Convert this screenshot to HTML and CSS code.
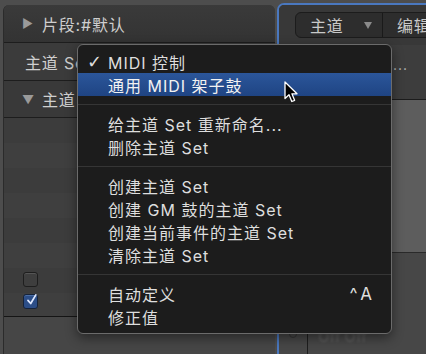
FILE: index.html
```html
<!DOCTYPE html>
<html lang="zh">
<head>
<meta charset="utf-8">
<link rel="stylesheet" href="styles.css">
</head>
<body>
<div class="app">
  <section class="left">
    <div class="row hdr"><span class="tri">▶</span><span>片段:#默认</span></div>
    <div class="row r2"><span class="clip">主道 Set</span></div>
    <div class="row r3"><span class="tri">▼</span><span class="clip2">主道 Set</span></div>
    <div class="list">
      <div class="cbrow"><span class="cb"></span></div>
      <div class="cbrow"><span class="cb on"><svg viewBox="0 0 14 16" width="14" height="16"><path d="M2.5 8.5 L6 12.5 L12.5 1.5" fill="none" stroke="#dfe9ff" stroke-width="2.2" stroke-linecap="round" stroke-linejoin="round"/></svg></span></div>
    </div>
    <div class="foot"></div>
  </section>
  <section class="right">
    <div class="toolbar">
      <div class="seg"><span class="seg-a">主道</span><span class="caret"></span><span class="seg-div"></span><span class="seg-b">编辑</span></div>
    </div>
    <div class="rrow"><span class="dots">...</span></div>
    <div class="rlight"></div>
    <div class="rbottom"><span class="knob"></span><span class="vline"></span><span class="offs">Off Off</span></div>
  </section>

  <div class="menu">
    <div class="item"><span class="check">✓</span><span>MIDI 控制</span></div>
    <div class="item hl"><span>通用 MIDI 架子鼓</span></div>
    <div class="sep"></div>
    <div class="item"><span>给主道 Set 重新命名...</span></div>
    <div class="item"><span>删除主道 Set</span></div>
    <div class="sep"></div>
    <div class="item"><span>创建主道 Set</span></div>
    <div class="item"><span>创建 GM 鼓的主道 Set</span></div>
    <div class="item"><span>创建当前事件的主道 Set</span></div>
    <div class="item"><span>清除主道 Set</span></div>
    <div class="sep"></div>
    <div class="item"><span>自动定义</span><span class="key">^A</span></div>
    <div class="item"><span>修正值</span></div>
  </div>

  <svg class="cursor" viewBox="0 0 16 23" width="16" height="23">
    <path d="M1 1 L1 17.5 L5 13.8 L7.8 20.5 L10.6 19.3 L7.9 12.8 L13 12.8 Z" fill="#000" stroke="#fff" stroke-width="1.3" stroke-linejoin="round"/>
  </svg>
</div>
</body>
</html>
```

FILE: styles.css
```css
* { box-sizing: border-box; }
html, body { margin: 0; padding: 0; }
body {
  width: 426px;
  height: 354px;
  overflow: hidden;
  background: #4a4a4a;
  font-family: "Inter", "Noto Sans CJK SC", sans-serif;
}
.app {
  position: relative;
  width: 426px;
  height: 354px;
  display: flex;
  gap: 2px;
  padding: 3px 0 0 3px;
  background: #4d4d4d;
}

/* left panel */
.left {
  width: 272px;
  margin-top: 2px;
  display: flex;
  flex-direction: column;
  background: #3d3d3d;
  border-radius: 6px 6px 0 0;
  border-left: 1px solid #2b2b2b;
  overflow: hidden;
}
.row {
  height: 38px;
  flex: none;
  display: flex;
  align-items: center;
  gap: 8px;
  padding-left: 18px;
  border-bottom: 1px solid #1d1d1d;
  color: #cfcfcf;
  font-size: 16px;
  letter-spacing: 0.8px;
  white-space: nowrap;
}
.hdr { height: 38px; background: linear-gradient(#3a3a3a, #333); }
.r2 { background: #3b3b3b; padding-left: 21px; }
.r3 { background: #393939; height: 37px; }
.clip { display: block; width: 55px; overflow: hidden; }
.clip2 { display: block; width: 38px; overflow: hidden; }
.tri { color: #9a9a9a; font-size: 12px; width: 12px; }
.list {
  flex: none;
  height: 199px;
  display: flex;
  flex-direction: column;
  justify-content: flex-end;
  padding: 0 0 4px 19px;
  background: repeating-linear-gradient(#3c3c3c 0 25px, #3f3f3f 25px 50px);
  border-bottom: 1px solid #151515;
}
.cbrow { height: 22px; display: flex; align-items: center; }
.cb {
  width: 15px;
  height: 15px;
  border-radius: 3px;
  background: #3e3e3e;
  border: 1px solid #1e1e1e;
  box-shadow: inset 0 1px 0 #555;
  display: flex;
  align-items: flex-end;
  justify-content: center;
}
.cb.on { background: #2c4e88; border-color: #16233a; box-shadow: inset 0 1px 0 #4b6ea6; overflow: visible; }
.cb.on svg { margin-left: 2px; }
.foot { flex: 1; background: #464646; }

/* right panel */
.right {
  flex: 1;
  display: flex;
  flex-direction: column;
  border-left: 2px solid #4a78bf;
  border-top: 2px solid #4a78bf;
  border-radius: 7px 0 0 0;
  overflow: hidden;
  background: #3c3c3c;
}
.toolbar {
  height: 40px;
  flex: none;
  display: flex;
  align-items: center;
  padding-left: 16px;
  background: #383838;
  overflow: hidden;
}
.seg {
  width: 160px;
  height: 26px;
  display: flex;
  align-items: center;
  border-radius: 6px;
  background: #2d2d2d;
  border: 1px solid #1c1c1c;
  color: #c9c9c9;
  font-size: 16px;
  flex: none;
}
.seg-a { padding-left: 14px; width: 56px; letter-spacing: 0.8px; }
.caret {
  width: 0; height: 0;
  border-left: 4px solid transparent;
  border-right: 4px solid transparent;
  border-top: 7px solid #8a8a8a;
  margin-left: 12px;
}
.seg-div { width: 1px; height: 24px; background: #1a1a1a; margin-left: 10px; }
.seg-b { padding-left: 14px; letter-spacing: 0.8px; }
.rrow {
  height: 55px;
  flex: none;
  background: #3d3d3d;
  border-bottom: 1px solid #1c1c1c;
  display: flex;
  justify-content: flex-end;
  padding: 12px 18px 0 0;
}
.dots { color: #b9b9b9; font-size: 14px; letter-spacing: 1px; line-height: 16px; }
.rlight { height: 153px; flex: none; background: #5d5d5d; border-bottom: 1px solid #2a2a2a; }
.rbottom { flex: 1; background: #474747; position: relative; display: flex; gap: 10px; align-items: flex-end; padding: 0 0 8px 10px; }
.knob { width: 8px; height: 8px; border-radius: 50%; border: 1px solid #333; margin-bottom: 8px; }
.vline { width: 1px; align-self: stretch; background: #1e1e1e; margin-bottom: -8px; }
.offs { color: #5a5a5a; font-size: 15px; font-weight: 600; filter: blur(1px); }

/* menu */
.menu {
  position: absolute;
  left: 77px;
  top: 44px;
  width: 315px;
  padding: 5px 0;
  background: #1c1c1c;
  border: 1px solid #6b6b6b;
  border-radius: 6px;
  box-shadow: 0 4px 12px rgba(0,0,0,0.45);
}
.item {
  position: relative;
  height: 23px;
  display: flex;
  align-items: center;
  justify-content: space-between;
  padding: 0 19px 0 30px;
  color: #dedede;
  font-size: 16px;
  letter-spacing: 1px;
  white-space: nowrap;
}
.item.hl { background: linear-gradient(#2b569a, #1f4483); color: #f2f2f2; }
.check { position: absolute; left: 9px; top: 0; font-family: "DejaVu Sans", sans-serif; font-size: 18px; line-height: 23px; color: #dedede; }
.key { font-size: 17px; letter-spacing: 4px; margin-right: -4px; }
.sep { height: 16px; display: flex; align-items: center; }
.sep::before { content: ""; flex: 1; height: 1px; background: #353535; }

.cursor { position: absolute; left: 284px; top: 81px; }
```
